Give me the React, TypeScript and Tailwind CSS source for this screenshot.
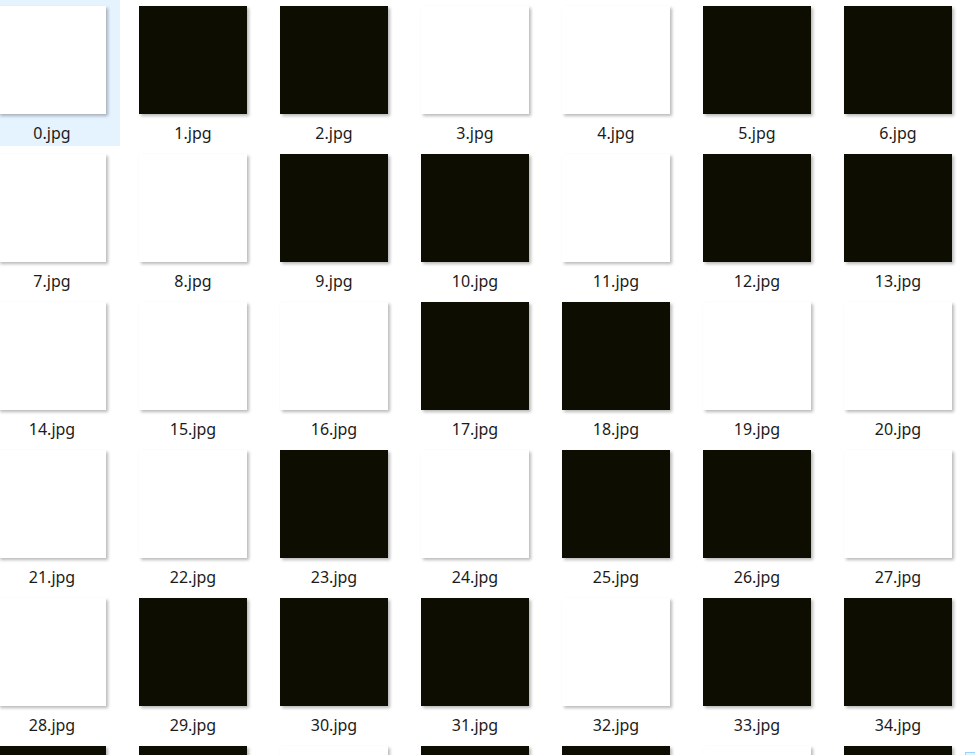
import React from 'react'

// 0 = white thumbnail, 1 = black thumbnail
const tones = [
  0, 1, 1, 0, 0, 1, 1,
  0, 0, 1, 1, 0, 1, 1,
  0, 0, 0, 1, 1, 0, 0,
  0, 0, 1, 0, 1, 1, 0,
  0, 1, 1, 1, 0, 1, 1,
  1, 1, 0, 1, 1, 0, 1,
]

function Item({ index, dark, selected }: { index: number; dark: boolean; selected: boolean }) {
  return (
    <div className={`flex h-[146px] w-[136px] flex-col items-center pt-[6px] ${selected ? 'bg-[#e5f3ff]' : ''}`}>
      <div
        className={`h-[108px] w-[108px] shrink-0 shadow-[2px_2px_3px_rgba(0,0,0,0.28)] ${
          dark ? 'bg-[#0e0d01]' : 'bg-white'
        }`}
      />
      <div className="mt-[9px] text-[16px] leading-[20px] text-[#1b1b1b]">{index}.jpg</div>
    </div>
  )
}

export default function App() {
  return (
    <div
      className="relative h-[755px] w-[975px] overflow-hidden bg-white"
      style={{ fontFamily: '"Noto Sans", "Noto Sans CJK SC", sans-serif' }}
    >
      <div className="-ml-[16px] grid grid-cols-[repeat(7,136px)] gap-x-[5px] gap-y-[2px]">
        {tones.map((t, i) => (
          <Item key={i} index={i} dark={t === 1} selected={i === 0} />
        ))}
      </div>
      {/* hover outline peeking in at the corner */}
      <div className="absolute bottom-0 right-0 h-[3px] w-[10px] border-l border-t border-[#99d1ff] bg-[#e5f3ff]" />
    </div>
  )
}
